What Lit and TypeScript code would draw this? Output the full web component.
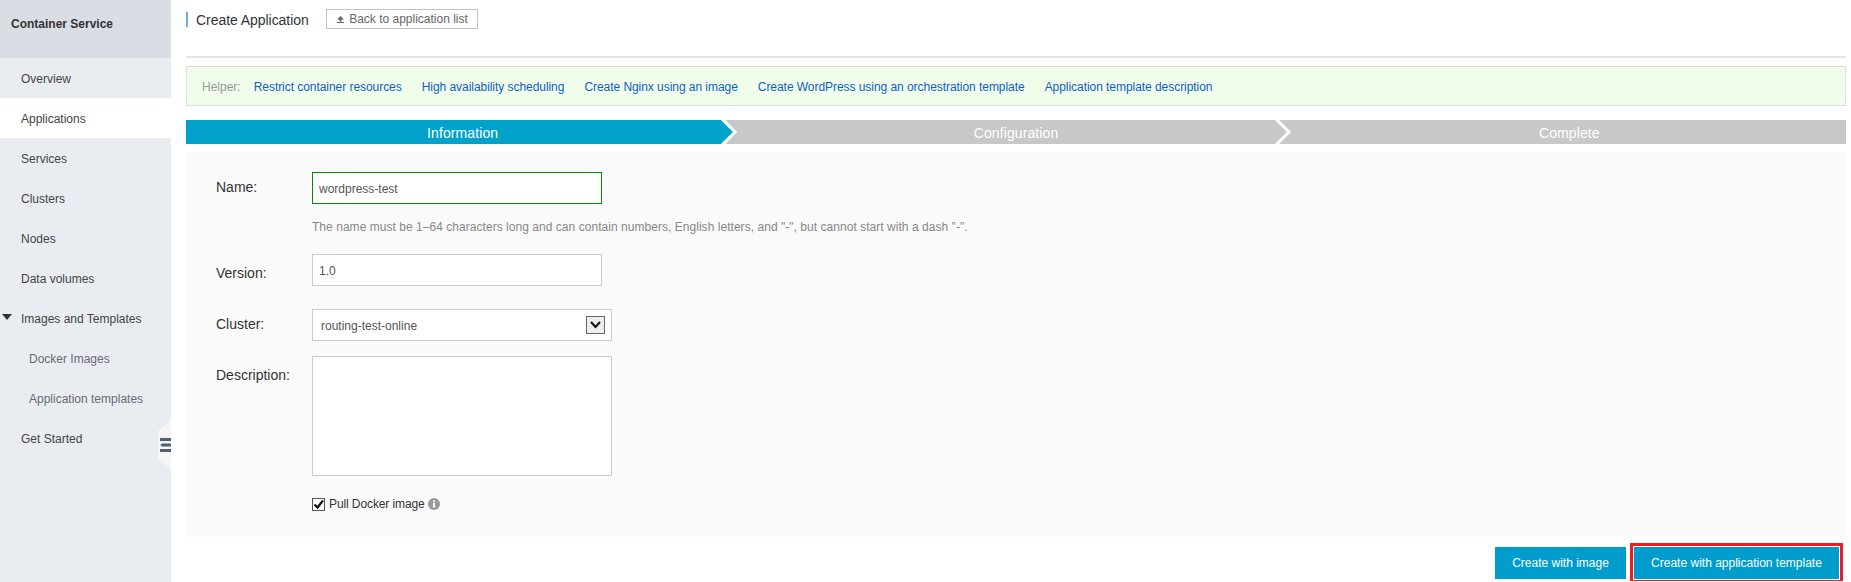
import { LitElement, html, css } from "lit";
import { customElement } from "lit/decorators.js";

@customElement("app-root")
export class AppRoot extends LitElement {
  static styles = css`
    :host { display: flex; width: 1851px; height: 582px; overflow: hidden; background: #fff; font-family: "Liberation Sans", Arial, sans-serif; font-size: 12px; color: #333; }
    * { box-sizing: border-box; }
    .side { width: 171px; flex: none; background: #e9edf2; position: relative; }
    .brand { height: 58px; background: #d9dee5; padding: 0 0 10px 11px; display: flex; align-items: center; font-weight: 700; color: #333; }
    .item { height: 40px; display: flex; align-items: center; padding: 1px 0 0 21px; color: #444; position: relative; }
    .item.active { background: #fff; }
    .item.sub { padding-left: 29px; color: #6a6a72; }
    .caret { position: absolute; left: 2px; top: 16px; width: 0; height: 0; border-left: 5px solid transparent; border-right: 5px solid transparent; border-top: 6px solid #333; }
    .handle { position: absolute; right: 0; top: 420px; width: 13px; height: 50px; background: #f5f5f6; clip-path: polygon(100% 0, 100% 100%, 0 78%, 0 22%); display: flex; flex-direction: column; justify-content: center; align-items: flex-end; }
    .handle svg { display: block; }
    .main { flex: 1; padding: 0 5px 0 15px; min-width: 0; }
    .head { height: 58px; border-bottom: 2px solid #e3e3e3; display: flex; align-items: flex-start; padding-top: 9px; }
    .title { border-left: 2px solid #78a9dd; height: 15px; margin-top: 3px; padding-left: 8px; display: flex; align-items: center; font-size: 14px; letter-spacing: -0.05px; color: #333; width: 140px; }
    .back { width: 152px; height: 20px; border: 1px solid #c2c2c2; color: #666; display: flex; align-items: center; justify-content: center; gap: 4px; background: #fff; }
    .helper { margin-top: 8px; height: 40px; border: 1px solid #dedede; background: #f1fdeb; display: flex; align-items: center; padding: 1px 0 0 15px; gap: 20px; }
    .helper .lbl { color: #999; margin-right: -7px; }
    .helper a { color: #0f5fc8; text-decoration: none; letter-spacing: -0.05px; }
    .steps { margin-top: 14px; display: grid; grid-template-columns: repeat(3, 1fr); height: 24px; }
    .step { background: #c8c8c8; color: #fff; position: relative; display: flex; align-items: center; justify-content: center; font-size: 14px; letter-spacing: 0.1px; padding-top: 1px; }
    .step.on { background: #00a2ca; }
    .step svg { position: absolute; right: 0; top: 0; }
    .panel { margin-top: 8px; height: 385px; background: #fafafa; padding: 20px 0 0 30px; }
    .row { display: flex; align-items: flex-start; }
    .row label { width: 96px; flex: none; font-size: 14px; color: #333; }
    .l-name { padding-top: 7px; }
    .l-version { padding-top: 11px; }
    .l-cluster { padding-top: 7px; }
    .l-desc { padding-top: 11px; }
    .r-version { margin-top: 20px; }
    .r-cluster { margin-top: 23px; }
    .r-desc { margin-top: 15px; }
    input, select, textarea { font: inherit; color: #555; background: #fff; border: 1px solid #ccc; border-radius: 0; outline: none; display: block; margin: 0; }
    input { width: 290px; height: 32px; padding: 1px 6px 0; }
    input.ok { border-color: #008f00; }
    .hint { margin: 16px 0 0 96px; color: #888; line-height: 14px; height: 14px; letter-spacing: 0.04px; }
    .sel { position: relative; width: 300px; }
    select { width: 300px; height: 32px; padding: 1px 8px 0; appearance: none; -webkit-appearance: none; }
    .arrow { position: absolute; right: 7px; top: 7px; }
    textarea { width: 300px; height: 120px; resize: none; }
    .pull { margin: 21px 0 0 96px; display: flex; align-items: center; height: 14px; gap: 3px; color: #333; letter-spacing: -0.1px; }
    .box { width: 13px; height: 13px; border: 1px solid #555; background: #fff; display: flex; margin-right: 1px; }
    .foot { display: flex; justify-content: flex-end; align-items: flex-start; margin: 6px 3px 0 0; gap: 4px; }
    .btn { height: 32px; background: #009ccc; color: #fff; display: flex; align-items: center; justify-content: center; }
    .b1 { width: 131px; margin-top: 4px; }
    .frame { border: solid #ed1c24; border-width: 3px 3px 1px; padding: 1px; }
    .b2 { width: 205px; }
  `;

  render() {
    const nav = ["Overview", "Applications", "Services", "Clusters", "Nodes", "Data volumes"];
    const links = ["Restrict container resources", "High availability scheduling", "Create Nginx using an image", "Create WordPress using an orchestration template", "Application template description"];
    return html`
      <aside class="side">
        <div class="brand">Container Service</div>
        ${nav.map((n) => html`<div class="item ${n === "Applications" ? "active" : ""}">${n}</div>`)}
        <div class="item"><span class="caret"></span>Images and Templates</div>
        <div class="item sub">Docker Images</div>
        <div class="item sub">Application templates</div>
        <div class="item">Get Started</div>
        <div class="handle">
          <svg width="11" height="14" viewBox="0 0 11 14">
            <rect x="0" y="0" width="11" height="3" fill="#51606f"/>
            <rect x="3" y="5.5" width="8" height="3" fill="#51606f"/>
            <path d="M0 7 L3 5 V9 Z" fill="#51606f"/>
            <rect x="0" y="11" width="11" height="3" fill="#51606f"/>
          </svg>
        </div>
      </aside>
      <main class="main">
        <div class="head">
          <div class="title">Create Application</div>
          <div class="back">
            <svg width="9" height="9" viewBox="0 0 9 9"><path d="M4.5 1 L8 4.5 H1 Z M3.5 4.5 H5.5 V6.5 H3.5 Z M1 7 H8 V8 H1 Z" fill="#666"/></svg>
            Back to application list
          </div>
        </div>
        <div class="helper">
          <span class="lbl">Helper:</span>
          ${links.map((l) => html`<a href="#">${l}</a>`)}
        </div>
        <div class="steps">
          <div class="step on">Information
            <svg width="22" height="24" viewBox="0 0 22 24">
              <rect width="22" height="24" fill="#c8c8c8"/>
              <path d="M0 0 H6 L17 12 L6 24 H0 Z" fill="#00a2ca"/>
              <path d="M5 -1 L18 12 L5 25" fill="none" stroke="#fff" stroke-width="3"/>
            </svg>
          </div>
          <div class="step">Configuration
            <svg width="22" height="24" viewBox="0 0 22 24">
              <path d="M5 -1 L18 12 L5 25" fill="none" stroke="#fff" stroke-width="3"/>
            </svg>
          </div>
          <div class="step">Complete</div>
        </div>
        <div class="panel">
          <div class="row"><label class="l-name">Name:</label><input class="ok" value="wordpress-test" /></div>
          <div class="hint">The name must be 1–64 characters long and can contain numbers, English letters, and "-", but cannot start with a dash "-".</div>
          <div class="row r-version"><label class="l-version">Version:</label><input value="1.0" /></div>
          <div class="row r-cluster"><label class="l-cluster">Cluster:</label>
            <div class="sel">
              <select><option>routing-test-online</option></select>
              <svg class="arrow" width="19" height="18" viewBox="0 0 19 18">
                <rect x=".5" y=".5" width="18" height="17" fill="#eee" stroke="#666"/>
                <path d="M5 6 L9.5 11 L14 6" fill="none" stroke="#111" stroke-width="2"/>
              </svg>
            </div>
          </div>
          <div class="row r-desc"><label class="l-desc">Description:</label><textarea></textarea></div>
          <div class="pull">
            <span class="box"><svg width="11" height="11" viewBox="0 0 11 11"><path d="M1.5 5.5 L4.5 8.5 L10 1.5" fill="none" stroke="#111" stroke-width="2.2"/></svg></span>
            <span>Pull Docker image</span>
            <svg width="12" height="12" viewBox="0 0 12 12"><circle cx="6" cy="6" r="6" fill="#9a9a9a"/><rect x="5" y="5" width="2" height="4.5" fill="#fff"/><rect x="5" y="2.5" width="2" height="1.6" fill="#fff"/></svg>
          </div>
        </div>
        <div class="foot">
          <div class="btn b1">Create with image</div>
          <div class="frame"><div class="btn b2">Create with application template</div></div>
        </div>
      </main>
    `;
  }
}
